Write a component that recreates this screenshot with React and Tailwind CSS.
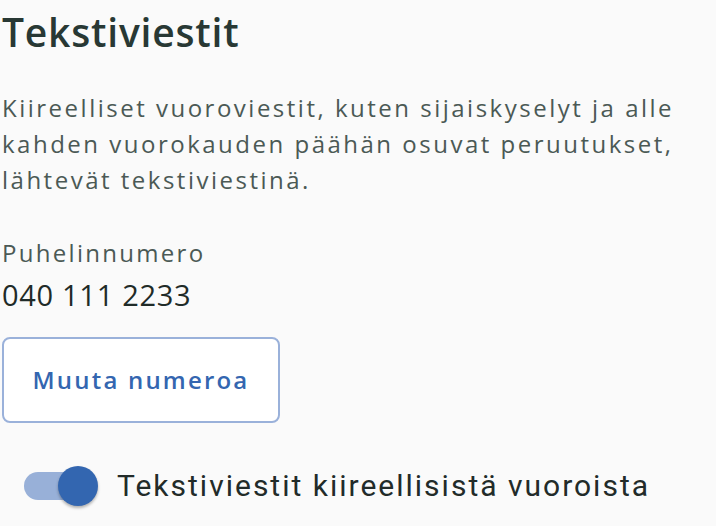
export default function App() {
  return (
    <div className="min-h-screen bg-[#fafafa] pl-[2px] pt-[8px] font-['Open_Sans',sans-serif] text-[#2f3d39]">
      <h1 className="text-[39px] leading-[48px] font-semibold tracking-[0.8px] text-[#283834]">Tekstiviestit</h1>

      <p className="mt-[34px] w-[690px] text-[24px] leading-[36px] tracking-[2.5px] text-[#4b5955]">
        Kiireelliset vuoroviestit, kuten sijaiskyselyt ja alle kahden vuorokauden päähän osuvat peruutukset, lähtevät tekstiviestinä.
      </p>

      <div className="mt-[37px]">
        <div className="text-[24px] leading-[36px] tracking-[2.3px] text-[#4b5955]">Puhelinnumero</div>
        <div className="mt-[6px] text-[29px] leading-[36px] tracking-[0.7px] text-[#1f2b28]">040 111 2233</div>
      </div>

      <button className="mt-[24px] flex h-[86px] w-[278px] items-center justify-center rounded-[8px] border-2 border-[#9ab1da] bg-white text-[24px] font-semibold tracking-[2.2px] text-[#3466b0]">
        Muuta numeroa
      </button>

      <label className="mt-[43px] flex items-center gap-[19px] pl-[22px]">
        <span className="relative flex h-[40px] w-[74px] items-center">
          <span className="h-[28px] w-[66px] rounded-full bg-[#98b0d8]" />
          <span className="absolute right-0 top-0 h-[40px] w-[40px] rounded-full bg-[#3366b0] shadow-[0_2px_3px_rgba(0,0,0,0.3)]" />
        </span>
        <span className="font-['Roboto',sans-serif] text-[30px] leading-[40px] tracking-[2px] text-[#222b29]">Tekstiviestit kiireellisistä vuoroista</span>
      </label>
    </div>
  )
}
